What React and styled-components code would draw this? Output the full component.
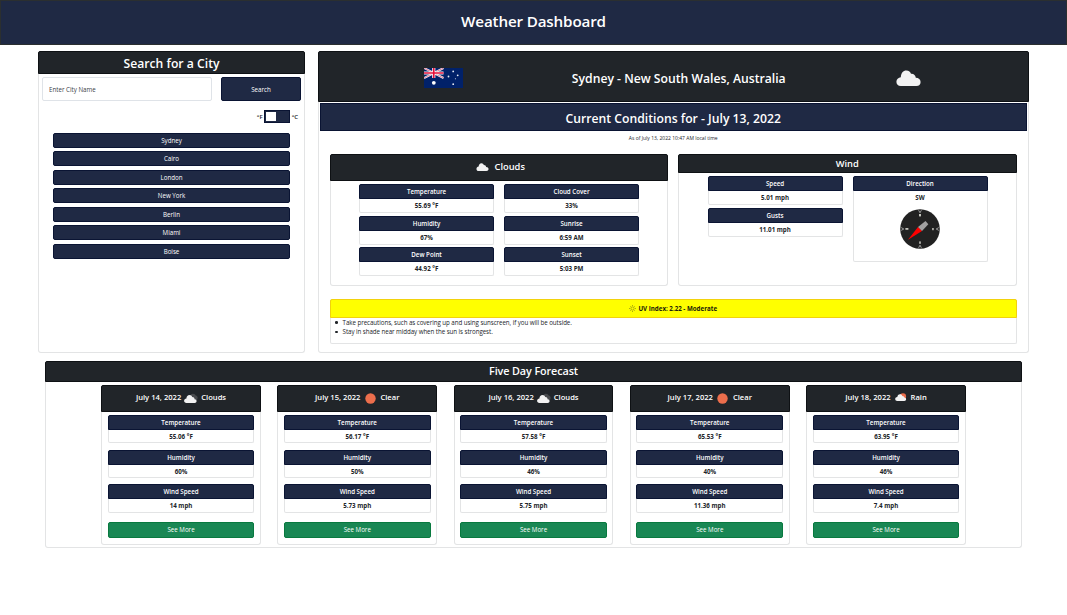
import React from "react";
import styled, { createGlobalStyle } from "styled-components";

const NAVY = "#1f2944";
const DARK = "#212529";
const LINE = "#e3e4e5";

const GlobalStyle = createGlobalStyle`
  * { box-sizing: border-box; }
  body {
    margin: 0;
    background: #fff;
    color: #212529;
    font-family: "Open Sans", "Noto Sans", sans-serif;
    font-size: 6.2px;
    line-height: 1.5;
  }
  h1, h2, h3, h4, p, ul { margin: 0; padding: 0; }
  button, input { font-family: inherit; }
`;

const TopBar = styled.header`
  height: 45px;
  display: flex;
  justify-content: center;
  align-items: center;
  padding-bottom: 1px;
  background: ${NAVY};
  border: 1px solid #2b2f30;
`;

const Title = styled.h1`
  color: #fff;
  font-weight: 600;
  font-size: ${(p) => p.$size}px;
  letter-spacing: ${(p) => p.$track || 0}px;
  line-height: 1;
  white-space: nowrap;
`;

const TopRow = styled.main`
  display: flex;
  align-items: stretch;
  gap: 12.5px;
  height: 302px;
  margin: 6px 38px 0 38px;
`;

const Panel = styled.section`
  display: flex;
  flex-direction: column;
  flex: none;
  background: #fff;
  border: 1px solid ${LINE};
  border-top: 0;
  border-radius: 3px;
  width: ${(p) => (p.$width ? `${p.$width}px` : "auto")};
  height: ${(p) => (p.$height ? `${p.$height}px` : "auto")};
`;

const DarkHead = styled.div`
  display: flex;
  justify-content: center;
  align-items: center;
  flex: none;
  height: ${(p) => p.$height}px;
  padding-top: ${(p) => p.$drop || 0}px;
  margin: 0 -1px;
  background: ${DARK};
  border: 1px solid #0e1114;
  border-radius: 2px 2px 0 0;
`;

const SearchRow = styled.form`
  display: flex;
  gap: 9px;
  padding: 3px 3px 0 3px;
`;

const CityInput = styled.input`
  width: 170px;
  height: 24px;
  padding: 0 6px;
  border: 1px solid #dfe3e8;
  border-radius: 2px;
  font-size: 6.2px;
  outline: none;
  &::placeholder { color: #3b4147; opacity: 1; }
`;

const NavyButton = styled.button`
  display: flex;
  justify-content: center;
  align-items: center;
  width: ${(p) => (p.$width ? `${p.$width}px` : "100%")};
  height: ${(p) => p.$height}px;
  padding: 1.5px 0 0;
  color: #fff;
  font-size: 6.2px;
  line-height: 1;
  background: ${NAVY};
  border: 1px solid #0a1433;
  border-radius: 2px;
`;

const UnitRow = styled.div`
  display: flex;
  justify-content: flex-end;
  align-items: center;
  gap: 1.5px;
  height: 13px;
  margin: 9px 6px 0 0;
  line-height: 1;
`;

const Unit = styled.span`
  padding-top: 1px;
  font-weight: 600;
  font-size: 6px;
`;

const Toggle = styled.div`
  width: 26px;
  height: 13px;
  padding: 1px;
  background: ${NAVY};
  border: 1px solid #0a1433;
`;

const Knob = styled.div`
  width: 10px;
  height: 9px;
  background: #fff;
`;

const CityList = styled.div`
  display: flex;
  flex-direction: column;
  gap: 3.55px;
  padding: 9.5px 14px 0 14px;
`;

const PlaceHead = styled(DarkHead)`
  margin-bottom: 1px;
`;

const PlaceSlot = styled.div`
  display: flex;
  justify-content: center;
  flex: ${(p) => (p.$width ? `0 0 ${p.$width}px` : "1 1 0")};
  padding-top: ${(p) => p.$drop || 0}px;
`;

const ConditionsHead = styled.div`
  display: flex;
  justify-content: center;
  align-items: center;
  flex: none;
  height: 28px;
  padding-top: 4px;
  margin: 0 1px;
  background: ${NAVY};
  border: 1px solid #0a1433;
`;

const Stamp = styled.p`
  text-align: center;
  font-size: 5px;
  line-height: 6px;
  margin-top: 4px;
  height: 19px;
`;

const DetailRow = styled.div`
  display: flex;
  gap: 10px;
  padding: 0 11px;
`;

const DetailBody = styled.div`
  display: flex;
  justify-content: center;
  gap: 10px;
  padding: 3.4px 0 0 0.6px;
`;

const Column = styled.div`
  display: flex;
  flex-direction: column;
  gap: ${(p) => p.$gap}px;
  width: ${(p) => (p.$width ? `${p.$width}px` : "auto")};
`;

const StatBox = styled.div`
  height: ${(p) => p.$height}px;
  text-align: center;
  border: 1px solid ${LINE};
  border-top: 0;
  border-radius: 2px;
  font-weight: 700;
`;

const StatName = styled.h4`
  height: 15px;
  margin: 0 -1px;
  color: #fff;
  font-size: 6.2px;
  font-weight: 600;
  padding-top: 1px;
  background: ${NAVY};
  border: 1px solid #0a1433;
  border-radius: 2px 2px 0 0;
  line-height: 12px;
`;

const StatValue = styled.p`
  line-height: 13px;
`;

const UvCard = styled.div`
  height: 45.5px;
  margin: 12.5px 11px 0;
  border: 1px solid ${LINE};
  border-top: 0;
  border-radius: 2px;
`;

const UvHead = styled.h3`
  display: flex;
  justify-content: center;
  align-items: center;
  gap: 2px;
  height: 19.5px;
  margin: 0 -1px;
  font-size: 6.2px;
  font-weight: 700;
  color: #212108;
  background: #ffff00;
  border: 1px solid #f2d20c;
  border-radius: 2px 2px 0 0;
`;

const Advice = styled.ul`
  padding-left: 4.5px;
  letter-spacing: -0.06px;
  line-height: 9.4px;
  list-style: none;
`;

const Tip = styled.li`
  display: flex;
  align-items: center;
  gap: 5px;
  height: 9.4px;
  &::before {
    content: "";
    width: 2.6px;
    height: 2.6px;
    border-radius: 50%;
    background: #212529;
  }
`;

const Forecast = styled(Panel)`
  margin: 7.5px 45px 0;
  height: 187.5px;
`;

const DayRow = styled.div`
  display: flex;
  justify-content: center;
  gap: 16.5px;
  padding-top: 3px;
`;

const DayHead = styled(DarkHead)`
  color: #fff;
  font-size: 7.6px;
  font-weight: 600;
  line-height: 1;
  white-space: nowrap;
`;

const IconSlot = styled.span`
  display: flex;
  justify-content: center;
  width: 20px;
`;

const DayBody = styled.div`
  display: flex;
  flex-direction: column;
  gap: 6.5px;
  padding: 3.4px 5.6px 0;
`;

const MoreButton = styled.button`
  height: 16px;
  margin-top: 2.6px;
  padding: 1px 0 0;
  color: #fff;
  font-size: 6.2px;
  line-height: 1;
  background: #198754;
  border: 1px solid #08793f;
  border-radius: 2px;
`;

const Cloud = ({ w = 25, h = 16 }) => (
  <svg width={w} height={h} viewBox="0 0 25 16">
    <path
      fill="#f2f2f2"
      d="M4.8 16C2 16 0.4 14.2 0.4 11.8C0.4 9.2 2.4 7.4 4.8 7.2C5 3 7.2 0.4 10.3 0.4C13 0.4 14.4 2 15 3.8C17.8 3.6 19.6 5.4 19.8 7.8C22.6 7.8 24.6 9.4 24.6 12C24.6 14.4 23 16 20.4 16Z"
    />
  </svg>
);

const BrokenClouds = () => (
  <svg width="14" height="10" viewBox="0 0 14 10">
    <path fill="#484a4d" d="M6 5C5.6 2.4 7 .8 9 .8C10.4 .8 11.2 1.6 11.6 2.6C13.2 2.8 13.8 4 13.6 5.2C13.4 6.6 12.4 7.2 11.6 7.2Z" />
    <path fill="#f2f2f2" d="M2.4 10C1 10 .1 9.1 .1 7.8C.1 6.5 1.1 5.6 2.4 5.5C2.5 3.5 3.8 2.1 5.5 2.1C7 2.1 7.9 3 8.2 4.1C9.7 4.1 10.5 5 10.6 6.2C11.9 6.3 12.6 7 12.6 8.1C12.6 9.3 11.8 10 10.6 10Z" />
  </svg>
);

const Sun = () => (
  <svg width="11" height="11" viewBox="0 0 11 11">
    <circle cx="5.5" cy="5.5" r="5.2" fill="#ec6e4c" />
  </svg>
);

const RainSun = () => (
  <svg width="12" height="10" viewBox="0 0 12 10">
    <circle cx="8" cy="3.4" r="3.1" fill="#ec6e4c" />
    <path fill="#f2f2f2" d="M2.3 8C1 8 .2 7.3 .2 6.1C.2 4.9 1.1 4.2 2.3 4.1C2.4 2.3 3.5 1.2 5 1.2C6.2 1.2 7 1.9 7.3 2.9C8.7 2.9 9.3 3.7 9.4 4.6C10.5 4.7 11.1 5.4 11.1 6.3C11.1 7.4 10.4 8 9.3 8Z" />
  </svg>
);

const DAY_ICONS = { broken: BrokenClouds, sun: Sun, rain: RainSun };

const Flag = () => (
  <svg width="39" height="20" viewBox="0 0 39 20">
    <rect width="39" height="20" fill="#012169" />
    <path d="M0 0L19.5 10M19.5 0L0 10" stroke="#f3eef4" strokeWidth="2" />
    <path d="M0 0L19.5 10M19.5 0L0 10" stroke="#dd5570" strokeWidth=".7" />
    <path d="M9.75 0V10M0 5H19.5" stroke="#fff" strokeWidth="3.2" />
    <path d="M9.75 0V10M0 5H19.5" stroke="#e4103b" strokeWidth="1.7" />
    <circle cx="9.8" cy="14.8" r="1.9" fill="#fff" />
    <g fill="#e8ecf6">
      <circle cx="29.2" cy="3.4" r=".9" />
      <circle cx="24.5" cy="8.5" r=".9" />
      <circle cx="33.7" cy="7.3" r=".9" />
      <circle cx="31.4" cy="10.8" r=".55" />
      <circle cx="29.2" cy="16.2" r=".9" />
    </g>
  </svg>
);

const CompassArt = styled.svg`
  display: block;
  margin: 4.5px auto 0;
`;

const Compass = () => (
  <CompassArt width="40" height="40" viewBox="0 0 40 40">
    <circle cx="20" cy="20" r="19.8" fill="#222" />
    <path
      stroke="#999"
      fill="none"
      d="M18.6 1.2L20 3.8L21.4 1.2M18.6 38.8L20 36.2L21.4 38.8M1.2 18.6L3.8 20L1.2 21.4M38.8 18.6L36.2 20L38.8 21.4"
    />
    <g fill="#c4c4bd">
      <rect x="19" y="5" width="2" height="2.4" />
      <rect x="19.2" y="32.4" width="1.6" height="2.4" />
      <rect x="5.4" y="19" width="3" height="1.8" />
      <rect x="32.2" y="19" width="1.5" height="2.2" />
    </g>
    <path fill="#f00" d="M8 30.8L18 17.9L22 21.9Z" />
    <path fill="#a0a0a0" d="M18 17.9L25.5 12L28.3 15.2L22 21.9Z" />
  </CompassArt>
);

const UvSun = () => (
  <svg width="7" height="7" viewBox="0 0 7 7" fill="none" stroke="#8b8b12" strokeWidth=".7">
    <circle cx="3.5" cy="3.5" r="1.6" />
    <path d="M3.5 0V1M3.5 6V7M0 3.5H1M6 3.5H7M1 1L1.7 1.7M5.3 5.3L6 6M6 1L5.3 1.7M1.7 5.3L1 6" />
  </svg>
);

const CloudHeadContent = styled.div`
  display: flex;
  align-items: center;
  gap: 6px;
  padding: 0 0 1px 3px;
`;

function Stat({ name, value, height = 29, children }) {
  return (
    <StatBox $height={height}>
      <StatName>{name}</StatName>
      <StatValue>{value}</StatValue>
      {children}
    </StatBox>
  );
}

const CITIES = ["Sydney", "Cairo", "London", "New York", "Berlin", "Miami", "Boise"];

const DAYS = [
  { date: "July 14, 2022", icon: "broken", sky: "Clouds", temp: "55.06 °F", hum: "60%", wind: "14 mph" },
  { date: "July 15, 2022", icon: "sun", sky: "Clear", temp: "56.17 °F", hum: "50%", wind: "5.73 mph" },
  { date: "July 16, 2022", icon: "broken", sky: "Clouds", temp: "57.58 °F", hum: "46%", wind: "5.75 mph" },
  { date: "July 17, 2022", icon: "sun", sky: "Clear", temp: "65.53 °F", hum: "40%", wind: "11.36 mph" },
  { date: "July 18, 2022", icon: "rain", sky: "Rain", temp: "63.95 °F", hum: "46%", wind: "7.4 mph" },
];

function DayCard({ day }) {
  const Icon = DAY_ICONS[day.icon];
  return (
    <Panel $width={159.75} $height={160}>
      <DayHead $height={27}>
        <span>{day.date}</span>
        <IconSlot><Icon /></IconSlot>
        <span>{day.sky}</span>
      </DayHead>
      <DayBody>
        <Stat name="Temperature" value={day.temp} height={28.3} />
        <Stat name="Humidity" value={day.hum} height={28.3} />
        <Stat name="Wind Speed" value={day.wind} height={28.3} />
        <MoreButton>See More</MoreButton>
      </DayBody>
    </Panel>
  );
}

export default function App() {
  return (
    <>
      <GlobalStyle />
      <TopBar>
        <Title $size={15.2} $track={-0.15}>Weather Dashboard</Title>
      </TopBar>
      <TopRow>
        <Panel $width={267}>
          <DarkHead $height={23} $drop={3}>
            <Title as="h2" $size={12.2}>Search for a City</Title>
          </DarkHead>
          <SearchRow>
            <CityInput placeholder="Enter City Name" />
            <NavyButton type="button" $width={80} $height={24}>Search</NavyButton>
          </SearchRow>
          <UnitRow>
            <Unit>°F</Unit>
            <Toggle><Knob /></Toggle>
            <Unit>°C</Unit>
          </UnitRow>
          <CityList>
            {CITIES.map((c) => (
              <NavyButton key={c} $height={15}>{c}</NavyButton>
            ))}
          </CityList>
        </Panel>
        <Panel $width={711.5}>
          <PlaceHead $height={51} $drop={3}>
            <PlaceSlot $width={257}><Flag /></PlaceSlot>
            <PlaceSlot $drop={3}>
              <Title as="h2" $size={12.2}>Sydney - New South Wales, Australia</Title>
            </PlaceSlot>
            <PlaceSlot $width={246}><Cloud /></PlaceSlot>
          </PlaceHead>
          <ConditionsHead>
            <Title as="h2" $size={12.2}>Current Conditions for - July 13, 2022</Title>
          </ConditionsHead>
          <Stamp>As of July 13, 2022 10:47 AM local time</Stamp>
          <DetailRow>
            <Panel $width={338.5} $height={132}>
              <DarkHead $height={27}>
                <CloudHeadContent>
                  <Cloud w={13} h={8} />
                  <Title as="h3" $size={9.3}>Clouds</Title>
                </CloudHeadContent>
              </DarkHead>
              <DetailBody>
                <Column $gap={2.5} $width={135}>
                  <Stat name="Temperature" value="55.69 °F" />
                  <Stat name="Humidity" value="67%" />
                  <Stat name="Dew Point" value="44.92 °F" />
                </Column>
                <Column $gap={2.5} $width={135}>
                  <Stat name="Cloud Cover" value="33%" />
                  <Stat name="Sunrise" value="6:59 AM" />
                  <Stat name="Sunset" value="5:03 PM" />
                </Column>
              </DetailBody>
            </Panel>
            <Panel $width={338.5} $height={132}>
              <DarkHead $height={19} $drop={1}>
                <Title as="h3" $size={9.3}>Wind</Title>
              </DarkHead>
              <DetailBody>
                <Column $gap={2.5} $width={135}>
                  <Stat name="Speed" value="5.01 mph" />
                  <Stat name="Gusts" value="11.01 mph" />
                </Column>
                <Column $gap={2.5} $width={135}>
                  <Stat name="Direction" value="SW" height={85.5}>
                    <Compass />
                  </Stat>
                </Column>
              </DetailBody>
            </Panel>
          </DetailRow>
          <UvCard>
            <UvHead>
              <UvSun />
              <span>UV Index: 2.22 - Moderate</span>
            </UvHead>
            <Advice>
              <Tip>Take precautions, such as covering up and using sunscreen, if you will be outside.</Tip>
              <Tip>Stay in shade near midday when the sun is strongest.</Tip>
            </Advice>
          </UvCard>
        </Panel>
      </TopRow>
      <Forecast>
        <DarkHead $height={21} $drop={1}>
          <Title as="h2" $size={10.8} $track={-0.1}>Five Day Forecast</Title>
        </DarkHead>
        <DayRow>
          {DAYS.map((d) => (
            <DayCard key={d.date} day={d} />
          ))}
        </DayRow>
      </Forecast>
    </>
  );
}
